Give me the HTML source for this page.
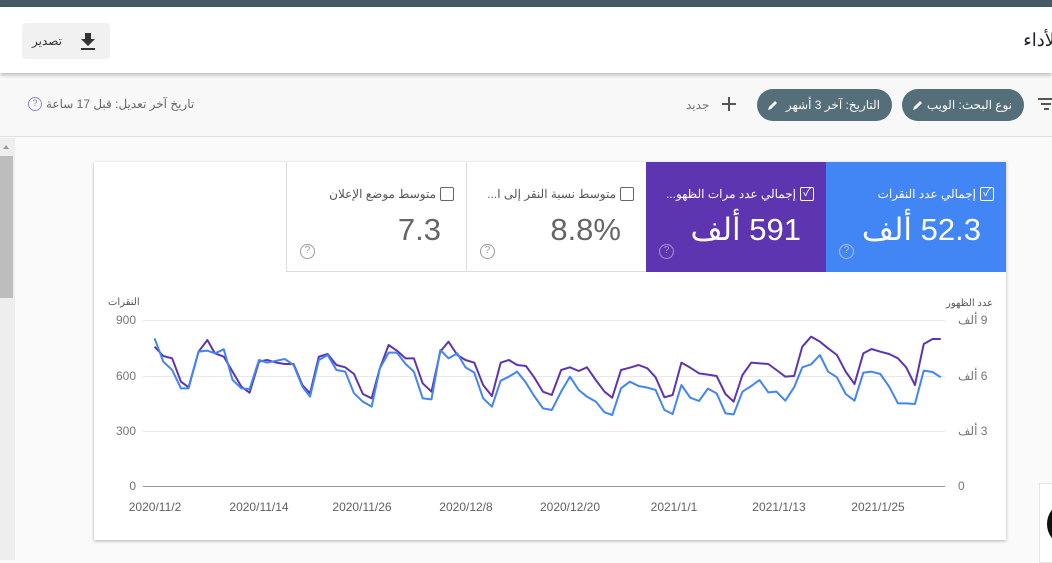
<!DOCTYPE html>
<html><head><meta charset="utf-8"><style>
*{margin:0;padding:0;box-sizing:border-box}
body{width:1052px;height:560px;overflow:hidden;background:#fafafa;font-family:"Liberation Sans","Noto Sans CJK SC",sans-serif;position:relative}
.a{position:absolute}
.t{white-space:nowrap;direction:rtl}
.chip{position:absolute;top:89px;height:32px;border-radius:16px;background:#546e7a;color:#fff;font-size:12px;line-height:32px;direction:rtl;padding:0 12px;white-space:nowrap}
.tile{position:absolute;top:162px;height:110px;width:180px}
.lbl{position:absolute;top:25px;right:30px;font-size:12px;direction:rtl;white-space:nowrap}
.cb{position:absolute;top:25px;right:12px;width:14px;height:14px;border:1.5px solid #666;border-radius:2px}
.num{position:absolute;top:50px;right:25px;font-size:31px;direction:rtl;white-space:nowrap}
.q{position:absolute;left:13px;top:82px;width:15px;height:15px;border:1.5px solid #999;border-radius:50%;font-size:10px;line-height:12px;text-align:center;color:#999}
.yl{position:absolute;font-size:12px;color:#757575;white-space:nowrap}
.dl{position:absolute;top:500px;font-size:12px;color:#616161;white-space:nowrap;transform:translateX(-50%)}
</style></head><body>
<div class="a" style="left:0;top:0;width:1052px;height:7px;background:#455a64"></div>
<div class="a" style="left:0;top:7px;width:1052px;height:66px;background:#fff;box-shadow:0 2px 4px rgba(0,0,0,.25);z-index:2"></div>
<div class="a t" style="left:1052px;top:30px;font-size:18px;color:#202124;z-index:3;transform:translateX(-100%);margin-left:8px">الأداء</div>
<div class="a" style="left:22px;top:23px;width:88px;height:36px;background:#f1f1f1;border-radius:4px;z-index:3">
 <div class="a t" style="left:10px;top:11px;font-size:12px;color:#333">تصدير</div>
 <svg class="a" style="left:58px;top:9px" width="16" height="18" viewBox="0 0 16 18"><path d="M5 1h6v6h4l-7 7-7-7h4z" fill="#333"/><rect x="1" y="16" width="14" height="2" fill="#333"/></svg>
</div>
<div class="a" style="left:0;top:73px;width:1052px;height:64px;background:#f8f8f8;border-bottom:1px solid #e0e0e0"></div>
<svg class="a" style="left:1038px;top:97px" width="16" height="14"><rect x="0" y="1" width="16" height="2" fill="#555"/><rect x="3" y="6" width="10" height="2" fill="#555"/><rect x="6" y="11" width="5" height="2" fill="#555"/></svg>
<div class="chip" style="left:902px;width:122px;text-align:right;padding-right:12px">نوع البحث: الويب<svg style="position:absolute;left:10px;top:10px" width="12" height="12"><path d="M1 11l1-3 6-6 2 2-6 6z" fill="#fff"/></svg></div>
<div class="chip" style="left:757px;width:135px;text-align:right">التاريخ: آخر 3 أشهر<svg style="position:absolute;left:10px;top:10px" width="12" height="12"><path d="M1 11l1-3 6-6 2 2-6 6z" fill="#fff"/></svg></div>
<svg class="a" style="left:722px;top:97px" width="14" height="14"><rect x="6" y="0" width="2" height="14" fill="#555"/><rect x="0" y="6" width="14" height="2" fill="#555"/></svg>
<div class="a t" style="left:686px;top:98px;font-size:12px;color:#777">جديد</div>
<div class="a t" style="left:46px;top:97px;font-size:12px;color:#666">تاريخ آخر تعديل: قبل 17 ساعة</div>
<div class="a" style="left:28px;top:97px;width:14px;height:14px;border:1.5px solid #8c8cd0;border-radius:50%;font-size:9px;line-height:11px;text-align:center;color:#888">?</div>
<div class="a" style="left:0;top:138px;width:15px;height:422px;background:#eee"></div>
<div class="a" style="left:0;top:156px;width:13px;height:142px;background:#bdbdbd"></div>
<div class="a" style="left:3px;top:145px;width:0;height:0;border-left:3.5px solid transparent;border-right:3.5px solid transparent;border-bottom:4px solid #999"></div>

<div class="a" style="left:94px;top:162px;width:912px;height:378px;background:#fff;box-shadow:0 1px 3px rgba(0,0,0,.3)"></div>
<div class="tile" style="left:826px;background:#4285f4;color:#fff"><div class="lbl">إجمالي عدد النقرات</div><div class="cb" style="border-color:#fff;font-size:11px;line-height:11px;text-align:center">✓</div><div class="num">52.3 ألف</div><div class="q" style="border-color:#a8c4f8;color:#a8c4f8">?</div></div>
<div class="tile" style="left:646px;background:#5e35b1;color:#fff"><div class="lbl">إجمالي عدد مرات الظهو...</div><div class="cb" style="border-color:#fff;font-size:11px;line-height:11px;text-align:center">✓</div><div class="num">591 ألف</div><div class="q" style="border-color:#a693d6;color:#a693d6">?</div></div>
<div class="tile" style="left:466px;border-left:1px solid #ddd;border-bottom:1px solid #ddd;color:#555"><div class="lbl">متوسط نسبة النقر إلى ا...</div><div class="cb"></div><div class="num" style="color:#666">8.8%</div><div class="q">?</div></div>
<div class="tile" style="left:286px;border-left:1px solid #ddd;border-bottom:1px solid #ddd;color:#555"><div class="lbl">متوسط موضع الإعلان</div><div class="cb"></div><div class="num" style="color:#666">7.3</div><div class="q">?</div></div>

<div class="a t" style="left:108px;top:297px;font-size:10px;color:#555">النقرات</div>
<div class="a t" style="left:946px;top:298px;font-size:10px;color:#555">عدد الظهور</div>
<div class="a" style="left:143px;top:320px;width:802px;height:1px;background:#e8e8e8"></div>
<div class="a" style="left:143px;top:376px;width:802px;height:1px;background:#e8e8e8"></div>
<div class="a" style="left:143px;top:431px;width:802px;height:1px;background:#e8e8e8"></div>
<div class="a" style="left:143px;top:486px;width:802px;height:1px;background:#999"></div>
<div class="yl" style="right:916px;top:313px">900</div>
<div class="yl" style="right:916px;top:369px">600</div>
<div class="yl" style="right:916px;top:424px">300</div>
<div class="yl" style="right:916px;top:479px">0</div>
<div class="yl t" style="left:958px;top:313px">9 ألف</div>
<div class="yl t" style="left:958px;top:369px">6 ألف</div>
<div class="yl t" style="left:958px;top:424px">3 ألف</div>
<div class="yl" style="left:958px;top:479px">0</div>
<div class="dl" style="left:155px">2020/11/2</div>
<div class="dl" style="left:259px">2020/11/14</div>
<div class="dl" style="left:362px">2020/11/26</div>
<div class="dl" style="left:466px">2020/12/8</div>
<div class="dl" style="left:570px">2020/12/20</div>
<div class="dl" style="left:674px">2021/1/1</div>
<div class="dl" style="left:779px">2021/1/13</div>
<div class="dl" style="left:878px">2021/1/25</div>
<svg class="a" style="left:90px;top:290px" width="920" height="270" viewBox="0 0 1568 810" preserveAspectRatio="none" fill="none" stroke-linejoin="round">
<polyline stroke="#5e35b1" stroke-width="2" vector-effect="non-scaling-stroke" points="110,170 125,198 140,205 155,275 168,292 185,185 200,150 213,190 228,200 243,245 258,290 272,308 288,215 302,210 318,218 332,222 347,222 362,285 375,310 390,200 405,192 420,225 435,232 450,252 465,312 480,325 494,235 509,165 523,182 538,205 552,205 567,280 582,305 597,185 611,155 626,195 640,210 655,218 670,285 685,318 700,218 714,210 728,225 743,228 757,262 772,305 787,315 803,240 818,232 833,243 847,232 862,270 877,305 890,323 905,240 920,233 935,225 950,235 964,262 979,322 993,315 1008,218 1023,233 1038,250 1053,254 1068,258 1083,312 1097,335 1112,255 1127,218 1141,220 1156,222 1170,240 1185,260 1200,258 1214,170 1229,140 1244,155 1258,175 1273,195 1288,245 1303,282 1318,190 1332,177 1347,185 1362,192 1377,205 1391,232 1406,285 1421,162 1436,147 1450,147"/>
<polyline stroke="#4285f4" stroke-width="2" vector-effect="non-scaling-stroke" points="110,145 125,215 140,240 155,295 168,295 185,185 200,182 213,190 228,178 243,270 258,295 272,297 288,210 302,218 318,212 332,207 347,225 362,290 375,320 390,210 405,195 420,240 435,245 450,310 465,335 480,350 494,235 509,188 523,188 538,222 552,245 567,325 582,328 597,180 611,205 626,190 640,232 655,248 670,325 685,350 700,272 714,260 728,245 743,278 757,318 772,355 787,360 803,305 818,260 833,300 847,320 862,335 877,367 890,375 905,295 920,275 935,288 950,293 964,300 979,360 993,372 1008,285 1023,323 1038,333 1053,296 1068,310 1083,370 1097,373 1112,305 1127,288 1141,270 1156,307 1170,305 1185,332 1200,292 1214,232 1229,223 1244,195 1258,245 1273,262 1288,312 1303,332 1318,248 1332,245 1347,252 1362,290 1377,340 1391,340 1406,342 1421,242 1436,246 1450,262"/>
</svg>
<div class="a" style="left:1039px;top:483px;width:20px;height:80px;background:#fff;border:1px solid #e5e5e5"></div>
<div class="a" style="left:1047px;top:505px;width:30px;height:38px;background:#111;border-radius:50%"></div>
</body></html>
